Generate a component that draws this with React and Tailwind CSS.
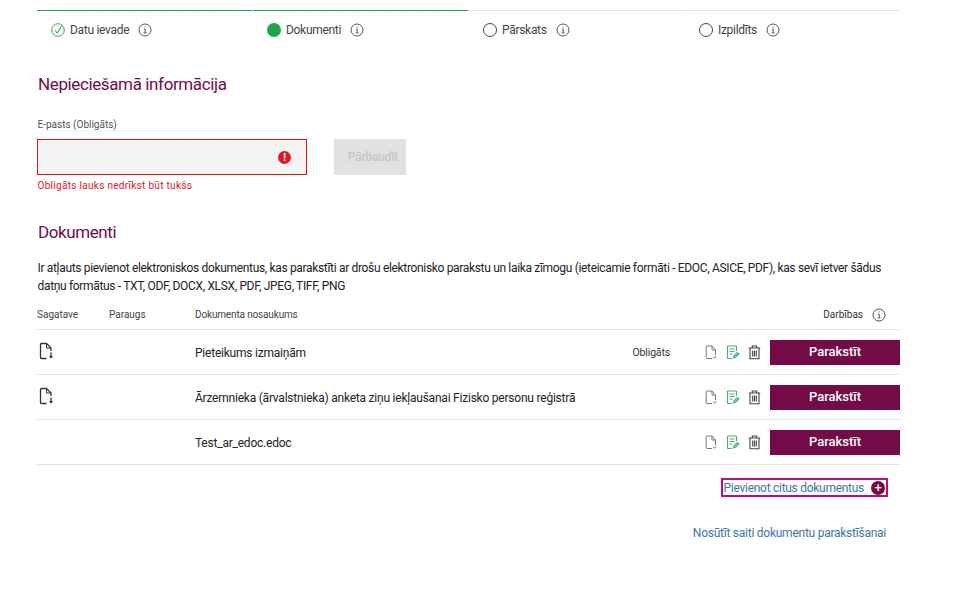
const InfoIcon = ({ size = 14 }) => (
	<svg width={size} height={size} viewBox="0 0 14 14" fill="none" stroke="#555" strokeWidth="1" className="shrink-0">
		<circle cx="7" cy="7" r="6" />
		<path d="M6 6.2h1.2v3.6M5.6 9.9h3" />
		<path d="M6.6 4h1" strokeWidth="1.2" />
	</svg>
);

const steps = [
	{ label: "Datu ievade", state: "done", line: "border-[#22a24a]" },
	{ label: "Dokumenti", state: "active", line: "border-[#22a24a]" },
	{ label: "Pārskats", state: "todo", line: "border-[#e2e2e2]" },
	{ label: "Izpildīts", state: "todo", line: "border-[#e2e2e2]" },
];

const StepMark = ({ state }) => {
	if (state === "done") {
		return (
			<svg width="14" height="14" viewBox="0 0 14 14" fill="none" className="shrink-0">
				<circle cx="7" cy="7" r="6.3" stroke="#22a24a" strokeWidth="0.9" />
				<path d="M4 7.2l2.2 3L10.6 2.8" stroke="#22a24a" strokeWidth="1" />
			</svg>
		);
	}
	if (state === "active") return <span className="w-[14px] h-[14px] rounded-full bg-[#22a24a] shrink-0" />;
	return <span className="w-[14px] h-[14px] rounded-full border border-[#444] shrink-0" />;
};

const FileDownloadIcon = () => (
	<svg width="16" height="18" viewBox="0 0 16 18" fill="none" stroke="#333" strokeWidth="1.3">
		<path d="M8.5 16.5H3.5a1 1 0 0 1-1-1V2.5a1 1 0 0 1 1-1H8.5L13 6V9" />
		<path d="M8.5 1.5V6H13" strokeWidth="1" />
		<path d="M13 10.5V15" />
		<path d="M11 14h4L13 16.8z" fill="#333" stroke="none" />
	</svg>
);

const FileCheckIcon = () => (
	<svg width="13" height="15" viewBox="0 0 13 15" fill="none" stroke="#777" strokeWidth="1">
		<path d="M7 13.5H2a.8.8 0 0 1-.8-.8V1.8A.8.8 0 0 1 2 1h5l3.5 4v5" />
		<path d="M7 1v4h3.5" />
		<path d="M8 12l1.3 1.3L11.5 11" />
	</svg>
);

const FileSignIcon = () => (
	<svg width="14" height="15" viewBox="0 0 14 15" fill="none" stroke="#4fae73" strokeWidth="1.2">
		<path d="M10.5 6V1.5a.5.5 0 0 0-.5-.5H2a.5.5 0 0 0-.5.5v11.5a.5.5 0 0 0 .5.5h4" />
		<path d="M3.5 4h5M3.5 6.5h5M3.5 9h3" />
		<path d="M7.5 12.8l.6-2 3.4-3.3 1.4 1.4-3.4 3.3z" fill="#a5d8b7" />
	</svg>
);

const TrashIcon = () => (
	<svg width="13" height="15" viewBox="0 0 13 15" fill="none" stroke="#444" strokeWidth="1.1">
		<path d="M.8 3h11.4M4.3 3V1h4.4v2" />
		<path d="M2 3v10.8h9V3" />
		<path d="M4.7 5.5v6M6.5 5.5v6M8.3 5.5v6" />
	</svg>
);

const docs = [
	{ name: "Pieteikums izmaiņām", template: true, required: true },
	{ name: "Ārzemnieka (ārvalstnieka) anketa ziņu iekļaušanai Fizisko personu reģistrā", template: true },
	{ name: "Test_ar_edoc.edoc" },
];

const DocRow = ({ doc }) => (
	<div className="h-[45px] flex items-center border-b border-[#e2e2e2]">
		<div className="w-[158px] pl-[1px] pb-[3px] flex items-center">{doc.template && <FileDownloadIcon />}</div>
		<div className="flex-1 pt-[1px] text-[12px] text-[#222] tracking-[-0.22px]">{doc.name}</div>
		{doc.required && <div className="pt-[1px] text-[10.5px] text-[#333] mr-[35px] tracking-[-0.15px]">Obligāts</div>}
		<div className="flex items-center gap-[8px] mr-[9px]">
			<FileCheckIcon />
			<FileSignIcon />
			<TrashIcon />
		</div>
		<button className="w-[130px] h-[25px] bg-[#730b47] text-white text-[13px] font-medium">Parakstīt</button>
	</div>
);

const App = () => {
	return (
		<div className="w-[958px] h-[589px] bg-white overflow-hidden font-['Roboto',sans-serif] text-[#333]">
			<div className="ml-[37px] w-[863px] pt-[10px]">
				<div className="flex gap-[1px]">
					{steps.map((s) => (
						<div key={s.label} className={`w-[215px] border-t ${s.line} flex items-center pl-[14px] pt-[10px]`}>
							<StepMark state={s.state} />
							<span className="ml-[5px] mr-[9px] text-[12px] text-[#444] tracking-[-0.3px]">{s.label}</span>
							<InfoIcon />
						</div>
					))}
				</div>

				<h2 className="mt-[33px] pl-[1px] text-[17px] leading-[24px] text-[#730b47] tracking-[-0.38px]">Nepieciešamā informācija</h2>

				<label className="block mt-[23px] pl-[0.5px] text-[10px] leading-[12px] text-[#555]">E-pasts (Obligāts)</label>
				<div className="mt-[8px] flex items-center">
					<div className="w-[270px] h-[36px] bg-[#f3f3f3] border border-[#e0141e] flex items-center justify-end pr-[15px]">
						<span className="w-[13px] h-[13px] rounded-full bg-[#de1b26] text-white text-[10px] font-bold leading-[13px] text-center">!</span>
					</div>
					<button className="ml-[27px] pl-[6px] w-[72px] h-[36px] bg-[#e1e1e1] text-[#c5c5c5] text-[12px] font-medium tracking-[-0.2px]">Pārbaudīt</button>
				</div>
				<p className="mt-[5px] pl-[0.5px] text-[10px] leading-[12px] text-[#e0142c] tracking-[0.3px]">Obligāts lauks nedrīkst būt tukšs</p>

				<h2 className="mt-[28px] pl-[1px] text-[17px] leading-[24px] text-[#730b47] tracking-[-0.4px]">Dokumenti</h2>
				<p className="mt-[15px] pl-[0.5px] text-[12px] leading-[18px] text-[#222] tracking-[-0.33px]">
					Ir atļauts pievienot elektroniskos dokumentus, kas parakstīti ar drošu elektronisko parakstu un laika zīmogu (ieteicamie formāti - EDOC, ASICE, PDF), kas sevī ietver šādus datņu formātus - TXT, ODF, DOCX, XLSX, PDF, JPEG, TIFF, PNG
				</p>

				<div className="mt-[5px] h-[30px] flex items-center border-b border-[#e2e2e2] text-[10px] text-[#444]">
					<div className="w-[72px]">Sagatave</div>
					<div className="w-[86px]">Paraugs</div>
					<div className="flex-1 tracking-[-0.15px]">Dokumenta nosaukums</div>
					<div className="mr-[9px] text-[#333]">Darbības</div>
					<div className="mr-[14px]"><InfoIcon /></div>
				</div>

				{docs.map((d) => (
					<DocRow key={d.name} doc={d} />
				))}

				<div className="flex justify-end mt-[13px] pr-[12px]">
					<a className="h-[19px] pl-[1px] pr-[1px] border-2 border-[#b8107a] flex items-center text-[12px] text-[#3c76aa] tracking-[-0.28px]">
						Pievienot citus dokumentus
						<span className="ml-[7px] w-[14px] h-[14px] rounded-full bg-[#730b47] text-white flex items-center justify-center text-[13px] leading-none">+</span>
					</a>
				</div>
				<div className="flex justify-end mt-[27px] pr-[14px]">
					<a className="text-[12px] text-[#3c76aa] tracking-[-0.25px]">Nosūtīt saiti dokumentu parakstīšanai</a>
				</div>
			</div>
		</div>
	);
};

export default App;
